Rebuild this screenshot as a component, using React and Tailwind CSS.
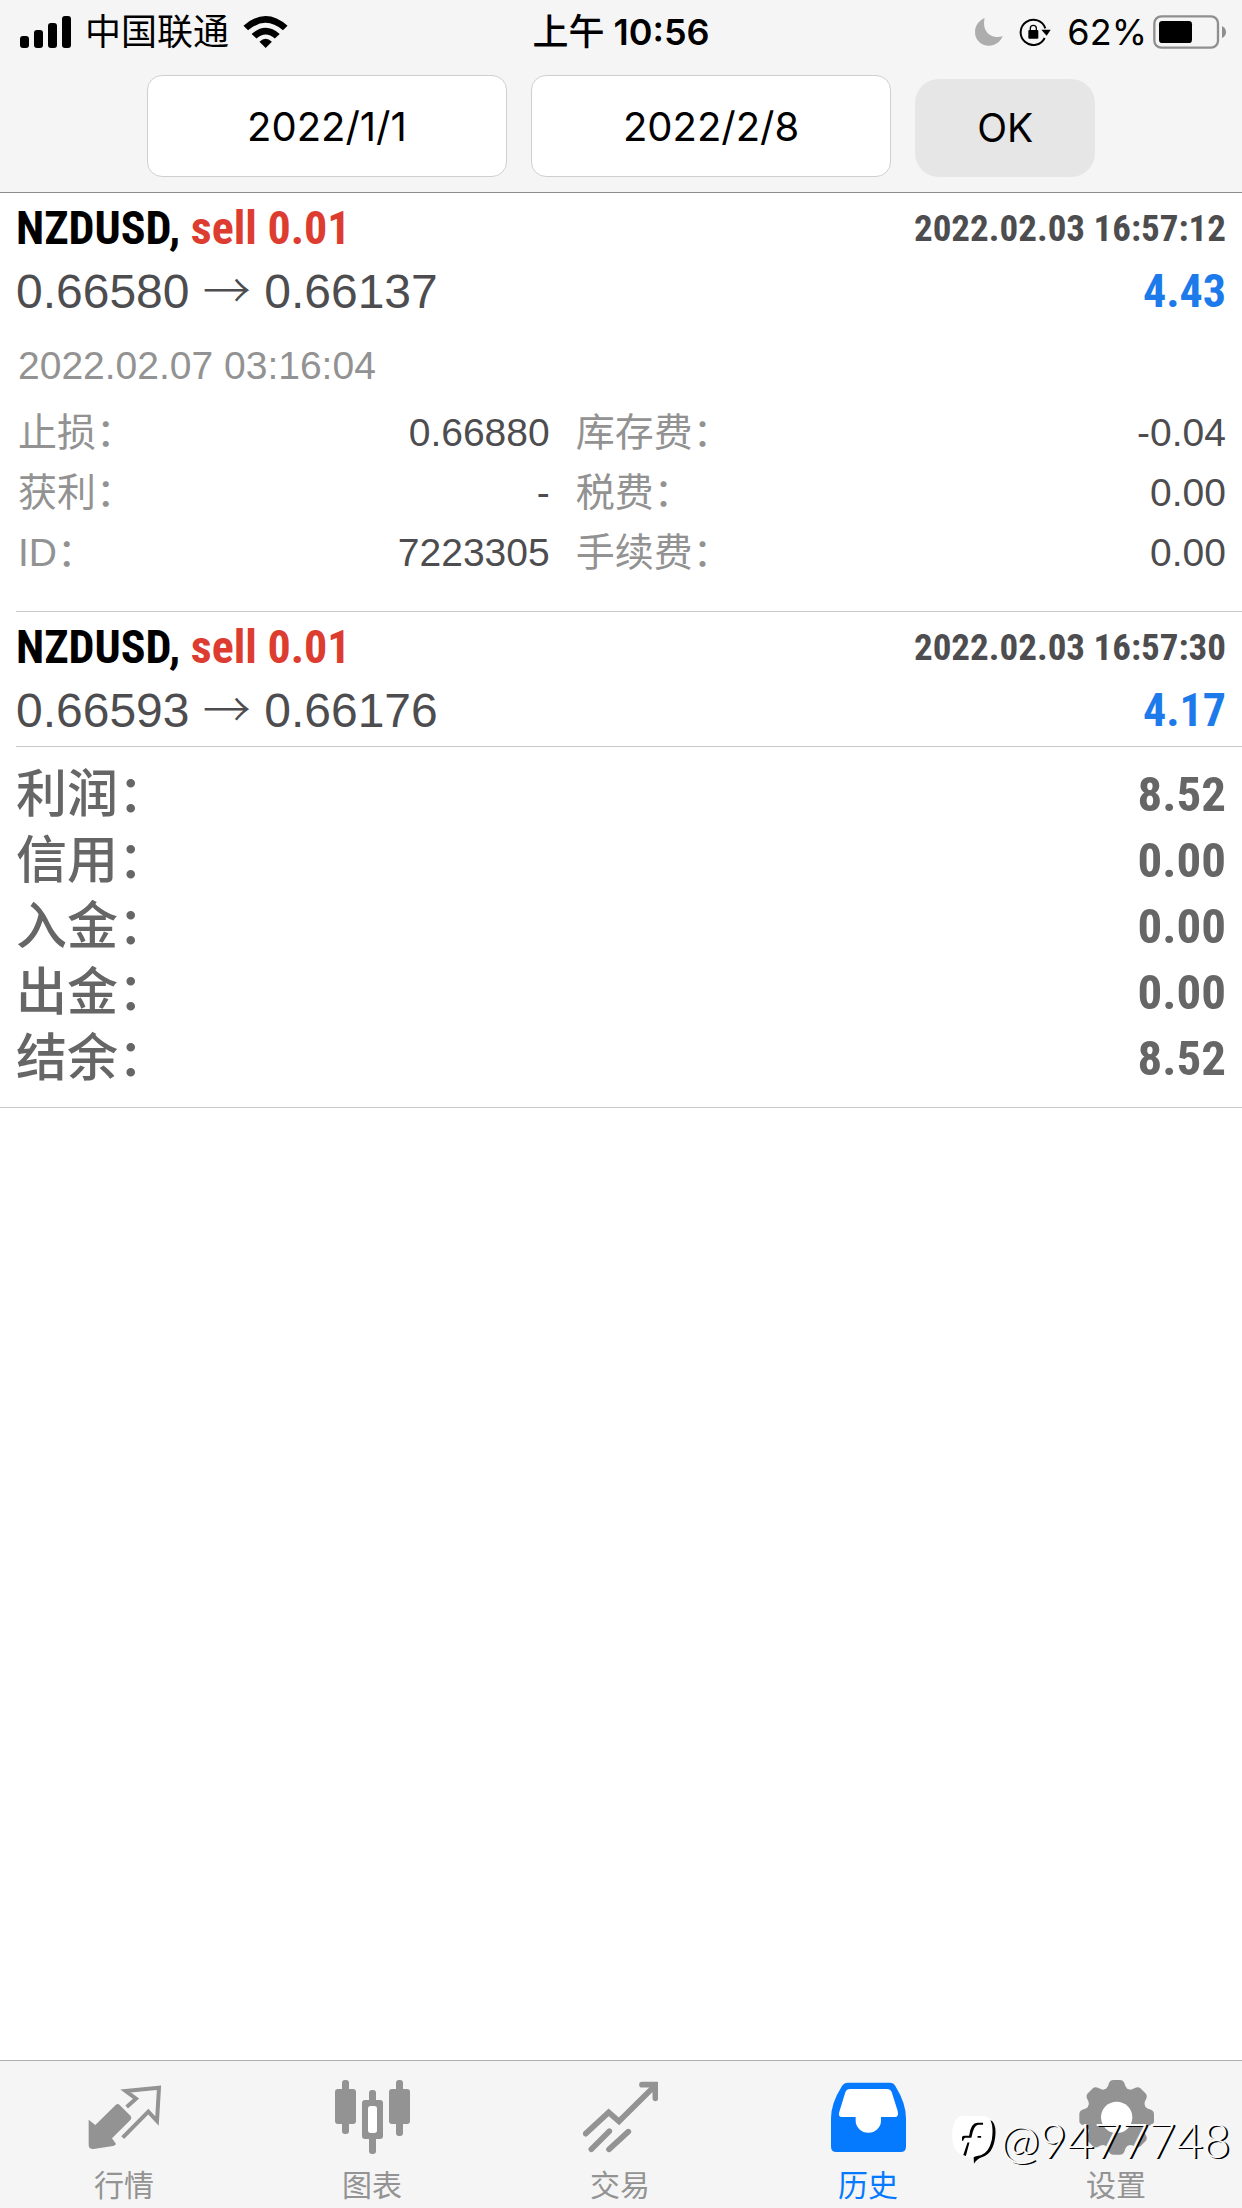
import React, { useState } from "react";

const orders = [
  {
    id: "7223305",
    symbol: "NZDUSD",
    side: "sell 0.01",
    openPrice: "0.66580",
    closePrice: "0.66137",
    openTime: "2022.02.03 16:57:12",
    closeTime: "2022.02.07 03:16:04",
    profit: "4.43",
    details: [
      ["止损：", "0.66880"],
      ["库存费：", "-0.04"],
      ["获利：", "-"],
      ["税费：", "0.00"],
      ["ID：", "7223305"],
      ["手续费：", "0.00"],
    ],
  },
  {
    id: "7223306",
    symbol: "NZDUSD",
    side: "sell 0.01",
    openPrice: "0.66593",
    closePrice: "0.66176",
    openTime: "2022.02.03 16:57:30",
    profit: "4.17",
  },
];

const summary = [
  ["利润：", "8.52"],
  ["信用：", "0.00"],
  ["入金：", "0.00"],
  ["出金：", "0.00"],
  ["结余：", "8.52"],
];

function StatusBar() {
  return (
    <div className="grid h-16 grid-cols-3 items-center px-4 text-[36px] leading-none text-black">
      <div className="flex items-center gap-[14px] pl-1">
        <svg className="h-8 w-[51px]" viewBox="60 42 153 96" aria-hidden="true">
          <rect x="60" y="102" width="27" height="36" rx="9" />
          <rect x="102" y="84" width="27" height="54" rx="9" />
          <rect x="144" y="63" width="27" height="75" rx="9" />
          <rect x="186" y="42" width="27" height="96" rx="9" />
        </svg>
        <span>中国联通</span>
        <svg className="h-8 w-[45px]" viewBox="730 39 135 98" aria-hidden="true">
          <path d="M730 69 Q798 9 865 69 L851 83 Q798 37 744 83 Z" />
          <path d="M755 94 Q798 56 841 94 L826 108 Q798 84 770 108 Z" />
          <path d="M779 118 Q798 100 817 118 L798 137 Z" />
        </svg>
      </div>
      <div className="text-center font-semibold">
        <span className="font-medium">上午</span> 10:56
      </div>
      <div className="flex items-center justify-end">
        <svg className="mr-4 h-7 w-7" viewBox="407 52 84 84" aria-hidden="true">
          <path fill="#adadad" d="M436 52 C418 60 407 75 407 94 C407 118 425 135 449 135 C468 135 483 124 490 107 C458 117 426 94 436 52 Z" />
        </svg>
        <svg className="mr-4 h-7 w-8" viewBox="545 53 96 84" aria-hidden="true">
          <path d="M622 113 A38 38 0 1 1 624 84" fill="none" stroke="#000" strokeWidth="6" />
          <path d="M612 88 L640 88 L628 106 Z" />
          <rect x="573" y="89" width="30" height="26" rx="3" />
          <path d="M579 91 V84 A9 9 0 0 1 597 84 V91" fill="none" stroke="#000" strokeWidth="4" />
        </svg>
        <span className="mr-[6px]">62%</span>
        <svg className="h-[34px] w-[73px]" viewBox="939 39 219 102" aria-hidden="true">
          <rect x="943" y="43" width="191" height="94" rx="21" fill="none" stroke="#8f8f8f" strokeWidth="7" />
          <rect x="957" y="57" width="99" height="66" rx="10" />
          <path fill="#8f8f8f" d="M1146 72 Q1158 78 1158 90 Q1158 102 1146 108 Z" />
        </svg>
      </div>
    </div>
  );
}

function DateInput({ label, value, onChange }) {
  return (
    <input
      type="text"
      aria-label={label}
      value={value}
      onChange={(e) => onChange(e.target.value)}
      className="h-[102px] w-[29%] rounded-[15px] border border-[#cfcfcf] bg-white text-center text-[40px] text-black"
    />
  );
}

function OrderItem({ order }) {
  return (
    <li className="ml-4 border-b border-[#c8c8c8] pt-1 pr-4 pb-1">
      <div className="flex items-center justify-between leading-[63px] font-bold">
        <h2 className="text-[46px] text-black">
          {order.symbol}, <span className="text-[#dd3c30]">{order.side}</span>
        </h2>
        <time className="text-[37px] text-[#4d4d50]">{order.openTime}</time>
      </div>
      <div className="flex h-[63px] items-center justify-between leading-[63px]">
        <p className="font-['Liberation_Sans','Noto_Sans_CJK_SC',sans-serif] text-[48px] text-[#4d4d50]">
          {order.openPrice} <span className="font-['Noto_Sans_CJK_SC',sans-serif] leading-none font-light">→</span> {order.closePrice}
        </p>
        <p className="text-[46px] font-bold text-[#1c7aea]">{order.profit}</p>
      </div>
      {order.details && (
        <div className="pt-[13px] pb-6 font-['Liberation_Sans','Noto_Sans_CJK_SC',sans-serif] text-[39px] leading-[60px]">
          <time className="mb-[7px] block pl-[2px] text-[#929292]">{order.closeTime}</time>
          <dl className="grid grid-cols-[45fr_55fr] gap-x-6">
            {order.details.map(([name, value]) => (
              <div key={name} className="flex justify-between">
                <dt className="pl-[2px] text-[#929292]">{name}</dt>
                <dd className="text-[#4d4d50]">{value}</dd>
              </div>
            ))}
          </dl>
        </div>
      )}
    </li>
  );
}

function QuotesIcon() {
  return (
    <svg className="h-[75px] w-[75px]" viewBox="256 120 225 225" fill="currentColor" aria-hidden="true">
      <path d="M261 239 L281 255 L342 195 Q348 189 354 195 L387 228 Q391 233 387 239 L331 295 L343 312 Q341 317 334 318 L276 327 Q261 328 261 314 Z" />
      <path d="M375 201 L403 176 L372 153 L472 143 L466 243 L440 215 L363 293" fill="none" stroke="currentColor" strokeWidth="12" />
    </svg>
  );
}

function ChartIcon() {
  return (
    <svg className="h-[75px] w-[75px]" viewBox="1005 120 225 225" fill="currentColor" aria-hidden="true">
      <rect x="1026" y="120" width="21" height="162" rx="9" />
      <rect x="1005" y="147" width="63" height="105" rx="9" />
      <rect x="1107" y="150" width="21" height="192" rx="9" />
      <rect x="1086" y="180" width="63" height="117" rx="9" />
      <rect x="1104" y="198" width="27" height="81" rx="8" fill="#fff" />
      <rect x="1188" y="120" width="21" height="168" rx="9" />
      <rect x="1167" y="147" width="63" height="105" rx="9" />
    </svg>
  );
}

function TradeIcon() {
  return (
    <svg className="h-[75px] w-[75px]" viewBox="126 120 225 225" fill="none" stroke="currentColor" strokeWidth="17" strokeLinecap="round" aria-hidden="true">
      <path d="M134 281 L203 217 L234 244 L338 141" />
      <path d="M303 134 H343 V175" />
      <path d="M151 328 L205 274" />
      <path d="M204 328 L262 275" />
    </svg>
  );
}

function HistoryIcon() {
  return (
    <svg className="h-[75px] w-[75px]" viewBox="870 120 225 225" fill="currentColor" aria-hidden="true">
      <path d="M921 128 H1046 Q1058 128 1063 138 Q1095 190 1095 235 V320 Q1095 336 1079 336 H886 Q870 336 870 320 V235 Q870 190 903 138 Q909 128 921 128 Z" />
      <path fill="#fff" d="M927 147 H1038 Q1048 147 1052 156 L1070 213 Q1074 231 1062 231 H1020 V242 A38 36 0 0 1 944 242 V231 H903 Q890 231 895 215 L913 157 Q917 147 927 147 Z" />
    </svg>
  );
}

function SettingsIcon() {
  return (
    <svg className="h-[75px] w-[75px]" viewBox="537 120 225 225" fill="currentColor" aria-hidden="true">
      {[0, 45, 90, 135, 180, 225, 270, 315].map((angle) => (
        <path
          key={angle}
          transform={`rotate(${angle} 650 232)`}
          d="M610 150 Q620 148 624 138 L627 129 Q631 120 640 120 H660 Q669 120 673 129 L676 138 Q680 148 690 150 L680 200 H620 Z"
        />
      ))}
      <circle cx="650" cy="232" r="86" />
      <circle cx="650" cy="232" r="47" fill="#fff" />
    </svg>
  );
}

const tabs = [
  { label: "行情", Icon: QuotesIcon },
  { label: "图表", Icon: ChartIcon },
  { label: "交易", Icon: TradeIcon },
  { label: "历史", Icon: HistoryIcon, active: true },
  { label: "设置", Icon: SettingsIcon },
];

function TabBar() {
  return (
    <nav className="relative flex border-t border-[#adb0ad] bg-[#f5f5f5] pt-[19px] pr-[2px] pb-[3px]">
      {tabs.map(({ label, Icon, active }) => (
        <a
          key={label}
          href="#"
          className={`flex flex-1 flex-col items-center gap-[10px] text-[30px] leading-10 ${active ? "text-[#067aff]" : "text-[#939393]"}`}
        >
          <Icon />
          <span>{label}</span>
        </a>
      ))}
      <div className="pointer-events-none absolute right-3 bottom-[42px] flex items-center gap-1">
        <svg className="h-12 w-[45px]" viewBox="40 182 135 148" aria-hidden="true">
          <path fill="#fff" d="M70 182 H140 Q173 188 173 240 Q172 295 132 310 L109 329 L106 311 Q45 307 42 251 Q40 188 70 182 Z" />
          <path d="M160 194 Q180 205 174 250 Q167 300 133 309 Q118 314 109 329 L108 310 Q112 305 130 303 Q155 295 164 255 Q170 215 160 194 Z" />
          <path d="M76 302 L84 305 L95 264 H89 Z M72 258 V247 Q74 243 80 243 H94 Q99 203 120 203 H137 V209 H122 Q108 210 101 249 H82 Q77 250 76 258 Z M120 244 H131 V249 H120 Z" />
        </svg>
        <span className="font-['Lato',sans-serif] text-[47px] leading-[52px] font-light text-[#fafafa] [text-shadow:2px_1px_0_#000]">
          @9477748
        </span>
      </div>
    </nav>
  );
}

function App() {
  const [from, setFrom] = useState("2022/1/1");
  const [to, setTo] = useState("2022/2/8");

  return (
    <div className="flex min-h-screen flex-col bg-white font-['Inter','Noto_Sans_CJK_SC',sans-serif]">
      <header className="border-b border-[#8c8c8c] bg-[#f5f5f5]">
        <StatusBar />
        <form className="flex items-end justify-center gap-6 pt-[11px] pb-[15px]" onSubmit={(e) => e.preventDefault()}>
          <DateInput label="开始日期" value={from} onChange={setFrom} />
          <DateInput label="结束日期" value={to} onChange={setTo} />
          <button type="submit" className="h-[98px] w-[180px] rounded-[24px] bg-[#e6e6e6] text-[39px] text-black">
            OK
          </button>
        </form>
      </header>

      <main className="flex-1 font-['Roboto_Condensed','Noto_Sans_CJK_SC',sans-serif]">
        <ul>
          {orders.map((order) => (
            <OrderItem key={order.id} order={order} />
          ))}
        </ul>
        <dl className="border-b border-[#c8c8c8] px-4 py-[15px] leading-[66px] text-[#666]">
          {summary.map(([name, value]) => (
            <div key={name} className="flex justify-between">
              <dt className="text-[51px] font-medium">{name}</dt>
              <dd className="text-[49px] font-bold">{value}</dd>
            </div>
          ))}
        </dl>
      </main>

      <TabBar />
    </div>
  );
}

export default App;
